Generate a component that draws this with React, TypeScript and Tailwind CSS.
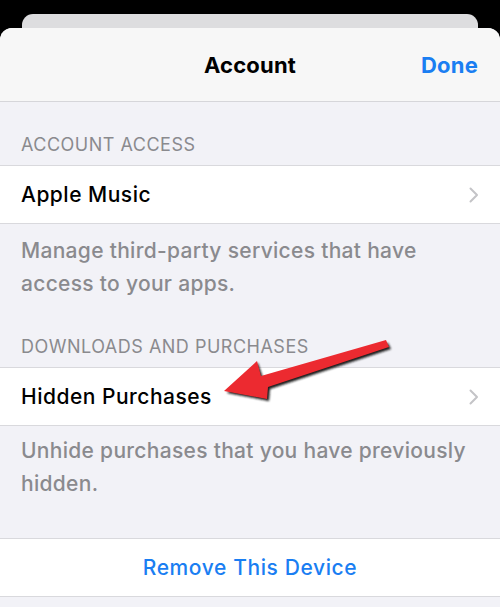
import React from 'react';

const font = { fontFamily: 'Inter, "Noto Sans", sans-serif' };

const Chevron = () => (
  <svg width="10" height="16" viewBox="0 0 10 16" className="shrink-0">
    <path d="M1.5 1.5 L8 8 L1.5 14.5" fill="none" stroke="#c4c4c7" strokeWidth="2" strokeLinecap="round" strokeLinejoin="round" />
  </svg>
);

const Row = ({ label }: { label: string }) => (
  <div className="flex h-[59px] shrink-0 items-center justify-between border-y border-[#d9d9dd] bg-white px-[21px]">
    <span className="text-[21px] font-medium tracking-[0.5px] text-black">{label}</span>
    <Chevron />
  </div>
);

const SectionHeader = ({ title, h }: { title: string; h: string }) => (
  <div className={`flex shrink-0 items-end px-[21px] pb-[9px] ${h}`}>
    <span className="text-[18px] leading-[22px] tracking-[0.5px] text-[#8a8a8e]">{title}</span>
  </div>
);

const Footer = ({ text, pt }: { text: string; pt: string }) => (
  <div className={`shrink-0 px-[21px] text-[21px] font-medium leading-[33px] tracking-[0.3px] text-[#8a8a8e] ${pt}`}>{text}</div>
);

const Arrow = () => (
  <svg className="pointer-events-none absolute left-0 top-0" width="500" height="607" viewBox="0 0 500 607">
    <defs>
      <filter id="sh" x="-20%" y="-50%" width="140%" height="200%">
        <feGaussianBlur stdDeviation="0.9" />
      </filter>
    </defs>
    <polygon
      points="227,393 258,363 263,378 388,343 391,349 270,389 269,401"
      fill="#1a1a1a"
      filter="url(#sh)"
    />
    <polygon points="224,391 257,361 261,376 386,340 389,347 268,387 267,399" fill="#ec2a30" />
  </svg>
);

export default function App() {
  return (
    <div className="relative h-[607px] w-[500px] overflow-hidden bg-black" style={font}>
      <div className="mx-[22px] mt-[14px] h-[30px] rounded-t-[11px] bg-[#dddddf]" />
      <div className="-mt-[16px] flex h-[593px] flex-col rounded-t-[12px] bg-[#f2f2f7]">
        <div className="relative flex h-[74px] shrink-0 items-center justify-center rounded-t-[12px] border-b border-[#d6d6da] bg-[#f7f7f7]">
          <span className="mt-[2px] text-[22px] font-bold tracking-[0.2px] text-black">Account</span>
          <span className="absolute right-[22px] mt-[2px] text-[22px] font-bold tracking-[0.2px] text-[#1a7ef2]">Done</span>
        </div>
        <SectionHeader title="ACCOUNT ACCESS" h="h-[63px]" />
        <Row label="Apple Music" />
        <Footer text="Manage third-party services that have access to your apps." pt="pt-[10px]" />
        <SectionHeader title="DOWNLOADS AND PURCHASES" h="h-[67px]" />
        <Row label="Hidden Purchases" />
        <Footer text="Unhide purchases that you have previously hidden." pt="pt-[8px]" />
        <div className="h-[38px] shrink-0" />
        <div className="flex h-[59px] shrink-0 items-center justify-center border-y border-[#d9d9dd] bg-white">
          <span className="text-[21px] font-medium tracking-[0.6px] text-[#1a7ef2]">Remove This Device</span>
        </div>
      </div>
      <Arrow />
    </div>
  );
}
